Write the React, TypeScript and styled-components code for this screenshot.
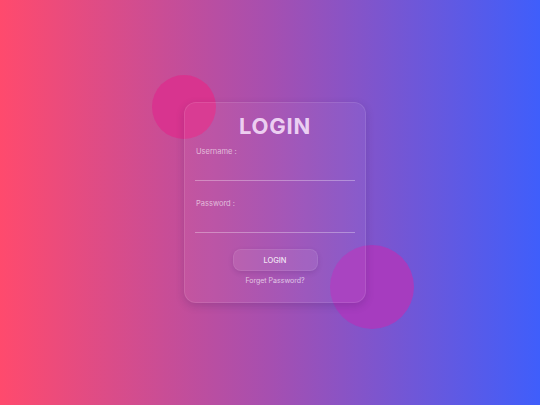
import React from "react";
import styled, { createGlobalStyle } from "styled-components";

const Global = createGlobalStyle`
  html, body { margin: 0; padding: 0; }
  body {
    width: 540px;
    height: 405px;
    overflow: hidden;
    font-family: "Inter", "Noto Sans", sans-serif;
  }
`;

const Page = styled.div`
  width: 540px;
  height: 405px;
  background: linear-gradient(90deg, #ff4a6d 0%, #a64fb0 50%, #3f5efb 100%);
  display: flex;
  align-items: flex-start;
  justify-content: flex-start;
  box-sizing: border-box;
  padding: 102px 0 0 184px;
`;

const Stage = styled.div`
  position: relative;
  width: 182px;
  height: 201px;
`;

const Circle = styled.div<{ $size: number; $left: number; $top: number; $color: string }>`
  position: absolute;
  width: ${(p) => p.$size}px;
  height: ${(p) => p.$size}px;
  left: ${(p) => p.$left}px;
  top: ${(p) => p.$top}px;
  border-radius: 50%;
  background: ${(p) => p.$color};
  filter: blur(0.6px);
`;

const Card = styled.form`
  position: relative;
  box-sizing: border-box;
  width: 182px;
  height: 201px;
  border-radius: 12px;
  background: rgba(255, 255, 255, 0.045);
  border: 1px solid rgba(255, 255, 255, 0.1);
  box-shadow: 0 3px 8px rgba(40, 20, 80, 0.18);
  padding: 10px 10px 0 10px;
  display: flex;
  flex-direction: column;
`;

const Title = styled.h1`
  margin: 0;
  text-align: center;
  font-size: 22px;
  line-height: 26px;
  font-weight: 700;
  letter-spacing: 0.8px;
  color: rgba(246, 224, 250, 0.9);
`;

const Field = styled.div<{ $mt: number }>`
  display: flex;
  flex-direction: column;
  margin-top: ${(p) => p.$mt}px;
`;

const Label = styled.label`
  font-size: 7.5px;
  line-height: 10px;
  color: rgba(255, 255, 255, 0.6);
  padding-left: 1px;
`;

const Input = styled.input`
  margin-top: 11px;
  height: 12px;
  padding: 0;
  background: transparent;
  border: none;
  border-bottom: 1px solid rgba(255, 255, 255, 0.32);
  outline: none;
  color: #fff;
  font-family: inherit;
`;

const Button = styled.button`
  align-self: center;
  margin-top: 16px;
  width: 85px;
  height: 22px;
  border-radius: 8px;
  background: rgba(255, 255, 255, 0.07);
  border: 1px solid rgba(255, 255, 255, 0.08);
  box-shadow: 0 2px 5px rgba(60, 20, 90, 0.15);
  color: rgba(255, 255, 255, 0.85);
  font-family: inherit;
  font-size: 7.5px;
  font-weight: 500;
  padding: 0;
`;

const Forgot = styled.a`
  align-self: center;
  margin-top: 5px;
  font-size: 7px;
  color: rgba(255, 255, 255, 0.68);
  text-decoration: none;
`;

export default function App() {
  return (
    <>
      <Global />
      <Page>
        <Stage>
          <Circle $size={64} $left={-32} $top={-27} $color="#d8348f" />
          <Circle $size={84} $left={146} $top={143} $color="#a63cbf" />
          <Card onSubmit={(e) => e.preventDefault()}>
            <Title>LOGIN</Title>
            <Field $mt={8}>
              <Label>Username :</Label>
              <Input type="text" />
            </Field>
            <Field $mt={18}>
              <Label>Password :</Label>
              <Input type="password" />
            </Field>
            <Button type="button">LOGIN</Button>
            <Forgot href="#">Forget Password?</Forgot>
          </Card>
        </Stage>
      </Page>
    </>
  );
}
